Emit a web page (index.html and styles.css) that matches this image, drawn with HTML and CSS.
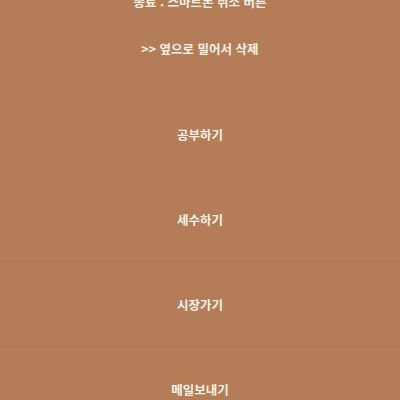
FILE: index.html
```html
<!DOCTYPE html>
<html lang="ko">
<head>
<meta charset="utf-8">
<link rel="stylesheet" href="styles.css">
</head>
<body>
<div class="page">
  <div class="intro">
    <p class="hint">종료 : 스마트폰 취소 버튼</p>
    <p class="hint">&gt;&gt; 옆으로 밀어서 삭제</p>
  </div>
  <ul class="list">
    <li class="item">공부하기</li>
    <li class="item">세수하기</li>
    <li class="item">시장가기</li>
    <li class="item">메일보내기</li>
  </ul>
</div>
</body>
</html>
```
FILE: styles.css
```css
html, body {
  margin: 0;
  padding: 0;
  background: #b47d57;
  overflow: hidden;
}
.page {
  width: 400px;
  height: 400px;
  overflow: hidden;
  font-family: "Noto Sans CJK KR", "Noto Sans", sans-serif;
  color: #f7f1ea;
  font-weight: 700;
  font-size: 12.5px;
}
.intro {
  margin-top: -7px;
  display: flex;
  flex-direction: column;
  align-items: center;
  gap: 29px;
  padding-bottom: 33px;
}
.hint {
  margin: 0;
  line-height: 18px;
}
.list {
  list-style: none;
  margin: 0;
  padding: 0;
}
.item {
  height: 84px;
  display: flex;
  align-items: center;
  justify-content: center;
  border-top: 1px solid #ad7853;
}
```
